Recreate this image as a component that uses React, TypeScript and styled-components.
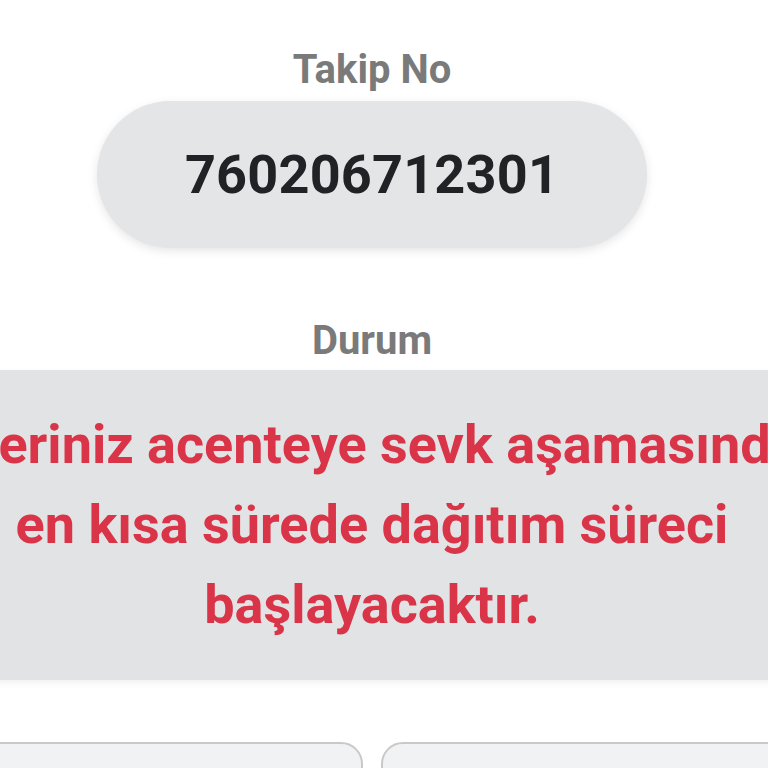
import React from 'react'
import styled, { createGlobalStyle } from 'styled-components'

const GlobalStyle = createGlobalStyle`
  html, body {
    margin: 0;
    padding: 0;
    background: #ffffff;
    overflow: hidden;
    font-family: Roboto, "Liberation Sans", Arial, sans-serif;
  }
`

const Page = styled.div`
  width: 1200px;
  margin-left: -228px;
  padding-top: 46px;
  display: flex;
  flex-direction: column;
  align-items: center;
`

const Label = styled.div<{ $gap?: number }>`
  font-size: 40px;
  line-height: 48px;
  font-weight: 700;
  color: #7a7a7a;
  margin-bottom: ${p => p.$gap ?? 7}px;
`

const TrackingPill = styled.div`
  width: 550px;
  height: 147px;
  border-radius: 74px;
  background: #e4e5e7;
  box-shadow: 0 3px 10px rgba(0, 0, 0, 0.10);
  display: flex;
  align-items: center;
  justify-content: center;
  font-size: 54px;
  line-height: 54px;
  font-weight: 700;
  color: #212226;
  letter-spacing: 0.2px;
  margin-bottom: 69px;
`

const StatusPanel = styled.div`
  align-self: stretch;
  background: #e1e3e5;
  box-shadow: 0 3px 6px rgba(0, 0, 0, 0.06);
  padding: 35px 0;
  text-align: center;
  font-size: 54px;
  line-height: 80px;
  font-weight: 700;
  color: #da3448;
  margin-bottom: 62px;
`

const StatusLine = styled.span`
  display: block;
  white-space: nowrap;
`

const CardRow = styled.div`
  display: flex;
  gap: 18px;
`

const Card = styled.div`
  width: 470px;
  height: 140px;
  border: 2px solid #c9c9c9;
  border-radius: 22px;
  background: #f1f2f3;
`

export default function App() {
  return (
    <>
      <GlobalStyle />
      <Page>
        <Label>Takip No</Label>
        <TrackingPill>760206712301</TrackingPill>
        <Label $gap={5}>Durum</Label>
        <StatusPanel>
          <StatusLine>Gönderiniz acenteye sevk aşamasındadır,</StatusLine>
          <StatusLine>en kısa sürede dağıtım süreci</StatusLine>
          <StatusLine>başlayacaktır.</StatusLine>
        </StatusPanel>
        <CardRow>
          <Card />
          <Card />
        </CardRow>
      </Page>
    </>
  )
}
